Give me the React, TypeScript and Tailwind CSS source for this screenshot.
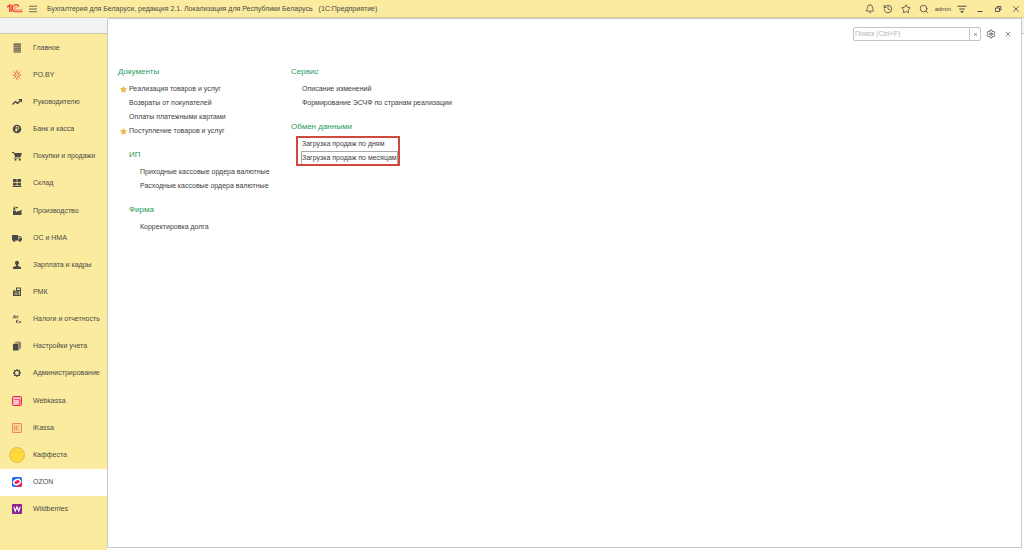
import type { ReactNode } from 'react';
import { Bell, History, Search, Settings, Star, X } from 'lucide-react';

type Section = {
  name: string;
  icon: ReactNode;
  active?: boolean;
};

type Command = {
  name: string;
  starred?: boolean;
  focused?: boolean;
};

type Group = {
  title: string;
  commands: Command[];
  nested?: boolean;
  marked?: boolean;
};

function Glyph({ children }: { children: ReactNode }) {
  return (
    <svg viewBox="0 0 20 20" className="size-2.5" fill="#4a4a48" aria-hidden="true">
      {children}
    </svg>
  );
}

const sections: Section[] = [
  {
    name: 'Главное',
    icon: (
      <Glyph>
        <path d="M3 1h15v2.4H3zM3 5h15v2.4H3zM3 9h15v2.4H3zM3 13h15v2.4H3zM3 17h15v2.200H3z" />
      </Glyph>
    ),
  },
  {
    name: 'PO.BY',
    icon: (
      <Glyph>
        <g stroke="#e8502f" strokeWidth="1.800" strokeLinecap="round">
          <path d="M10 1v5M10 14v5M2 10h6M12 10h6M4 3.500l3.500 4M16 3.500l-3.500 4M4 16.500l3.500-4M16 16.500l-3.500-4" />
        </g>
      </Glyph>
    ),
  },
  {
    name: 'Руководителю',
    icon: (
      <Glyph>
        <path
          d="M1 15l6-6 4 4 6-6"
          fill="none"
          stroke="#4a4a48"
          strokeWidth="2.8"
          strokeLinejoin="round"
        />
        <path d="M12.500 4H20v7.500z" />
      </Glyph>
    ),
  },
  {
    name: 'Банк и касса',
    icon: (
      <Glyph>
        <circle cx="10" cy="10" r="8.500" />
        <path
          d="M8.500 15.500V5h2.500a2.700 2.700 0 0 1 0 5.600H6.500M6.500 13H11"
          fill="none"
          stroke="#fbeb9e"
          strokeWidth="1.600"
        />
      </Glyph>
    ),
  },
  {
    name: 'Покупки и продажи',
    icon: (
      <Glyph>
        <path d="M0 2h4l1 2h15l-3 8H7l-.5 1.500H18V15H4.500L6 11 3 4H0z" />
        <circle cx="7" cy="17.500" r="2" />
        <circle cx="15.500" cy="17.500" r="2" />
      </Glyph>
    ),
  },
  {
    name: 'Склад',
    icon: (
      <Glyph>
        <path d="M2 2h7.300v6.500H2zM10.700 2H18v6.500h-7.300zM2 9.800h7.300V15H2zM10.700 9.800H18V15h-7.300zM1 16h18v2.200H1z" />
      </Glyph>
    ),
  },
  {
    name: 'Производство',
    icon: (
      <Glyph>
        <path d="M2 18V9h5l2 3 5-3v2l5-4v11zM2 7.500L3 4h3l1 3.500zM3 1h3v2H3zM7 2h5v2.500H7z" />
      </Glyph>
    ),
  },
  {
    name: 'ОС и НМА',
    icon: (
      <Glyph>
        <path d="M0 4h12v11H0zM13 6h4l3 4.500V15h-7zM14.300 7.500v3h3.700l-2-3z" fillRule="evenodd" />
        <circle cx="4.500" cy="15.500" r="2.300" />
        <circle cx="15.500" cy="15.500" r="2.300" />
      </Glyph>
    ),
  },
  {
    name: 'Зарплата и кадры',
    icon: (
      <Glyph>
        <path d="M10 1.500a4 4 0 0 1 4 4c0 2-1 3.500-2 4.500v2l6 2v4H2v-4l6-2v-2c-1-1-2-2.500-2-4.500a4 4 0 0 1 4-4z" />
      </Glyph>
    ),
  },
  {
    name: 'РМК',
    icon: (
      <Glyph>
        <path
          d="M8 1h10v17H2V7h6zM10 3v3h6V3zM5 9v2h2V9zM9 9v2h2V9zM5 13v2h6v-2zM13.500 8v8h2V8z"
          fillRule="evenodd"
        />
      </Glyph>
    ),
  },
  {
    name: 'Налоги и отчетность',
    icon: (
      <Glyph>
        <g fill="none" stroke="#4a4a48" strokeWidth="1.600">
          <path d="M2 9l3-7 3 7M3 6.500h4M8.500 4.500h4M10.500 4.500V9M9 12v6M13 12l-3.500 3 3.500 3M14.500 14l3.500 4M18 14l-3.500 4" />
        </g>
      </Glyph>
    ),
  },
  {
    name: 'Настройки учета',
    icon: (
      <Glyph>
        <path d="M2 6h11v13H2z" />
        <path d="M4.500 4.300h10.300V17M7 2.300h10V15" fill="none" stroke="#4a4a48" strokeWidth="1.300" />
      </Glyph>
    ),
  },
  {
    name: 'Администрирование',
    icon: (
      <Glyph>
        <circle cx="10" cy="10" r="5" fill="none" stroke="#4a4a48" strokeWidth="2.400" />
        <path
          d="M10 2v3M10 15v3M2 10h3M15 10h3M4.300 4.300l2.200 2.200M13.500 13.500l2.200 2.200M4.300 15.700l2.200-2.200M13.500 6.500l2.200-2.200"
          stroke="#4a4a48"
          strokeWidth="2.600"
        />
      </Glyph>
    ),
  },
  {
    name: 'Webkassa',
    icon: (
      <svg viewBox="0 0 20 20" className="size-2.5" aria-hidden="true">
        <rect x="1" y="1" width="18" height="18" rx="2" fill="#f9a3ac" stroke="#f5264f" strokeWidth="2" />
        <path d="M4 5.500h12M4 9h9M4 12.500h9M4 16h6" stroke="#fff" strokeWidth="1.300" />
        <path d="M15.500 8v9M4 7.200h12" stroke="#f5264f" strokeWidth="1.500" />
      </svg>
    ),
  },
  {
    name: 'iKassa',
    icon: (
      <svg viewBox="0 0 20 20" className="size-2.5" aria-hidden="true">
        <rect x="1" y="1" width="18" height="18" rx="1" fill="#fbdc91" stroke="#ed7f55" strokeWidth="1.800" />
        <path d="M5 5v10M8.500 5v10M14.500 5l-5.500 5 5.500 5" fill="none" stroke="#ed7f55" strokeWidth="1.700" />
      </svg>
    ),
  },
  {
    name: 'Каффеста',
    icon: (
      <svg viewBox="0 0 32 32" className="size-4" aria-hidden="true">
        <circle cx="16" cy="16" r="15" fill="#ffda3a" stroke="#e3ac55" strokeWidth="1.600" />
        <path d="M8 11h2M13 9h2M18 11h2M23 9h1" stroke="#e0a83c" strokeWidth="1.600" />
      </svg>
    ),
  },
  {
    name: 'OZON',
    active: true,
    icon: (
      <svg viewBox="0 0 20 20" className="size-2.5" aria-hidden="true">
        <rect width="20" height="20" rx="4" fill="#1769f5" />
        <path d="M20 9v7a4 4 0 0 1-4 4H8z" fill="#f5204f" />
        <ellipse cx="10" cy="10" rx="8.500" ry="6.500" transform="rotate(-22 10 10)" fill="#fff" />
        <ellipse cx="10" cy="10" rx="5.500" ry="3.300" transform="rotate(-22 10 10)" fill="#f5204f" />
      </svg>
    ),
  },
  {
    name: 'Wildberries',
    icon: (
      <svg viewBox="0 0 20 20" className="size-2.5" aria-hidden="true">
        <rect width="20" height="20" rx="2" fill="#8d2391" />
        <path d="M3.500 5.500l3 9 3.500-9 3.500 9 3-9" fill="none" stroke="#fff" strokeWidth="2.200" />
      </svg>
    ),
  },
];

const columns: Group[][] = [
  [
    {
      title: 'Документы',
      commands: [
        { name: 'Реализация товаров и услуг', starred: true },
        { name: 'Возвраты от покупателей' },
        { name: 'Оплаты платежными картами' },
        { name: 'Поступление товаров и услуг', starred: true },
      ],
    },
    {
      title: 'ИП',
      nested: true,
      commands: [
        { name: 'Приходные кассовые ордера валютные' },
        { name: 'Расходные кассовые ордера валютные' },
      ],
    },
    {
      title: 'Фирма',
      nested: true,
      commands: [{ name: 'Корректировка долга' }],
    },
  ],
  [
    {
      title: 'Сервис',
      commands: [
        { name: 'Описание изменений' },
        { name: 'Формирование ЭСЧФ по странам реализации' },
      ],
    },
    {
      title: 'Обмен данными',
      marked: true,
      commands: [
        { name: 'Загрузка продаж по дням' },
        { name: 'Загрузка продаж по месяцам', focused: true },
      ],
    },
  ],
];

function Logo() {
  return (
    <svg viewBox="0 0 32 18" className="h-[9px] w-4" fill="none" stroke="#ee3a3a" aria-hidden="true">
      <path d="M0 6.500L5.500 2.500V16" strokeWidth="3" />
      <path d="M9.500 1v15" strokeWidth="2" />
      <path d="M24 5.500A7 7 0 1 0 18 15.500H31" strokeWidth="2.200" />
      <path d="M20.500 7.500A3 3 0 1 0 18 12H31" strokeWidth="1.400" />
    </svg>
  );
}

function TitleBar() {
  return (
    <header className="flex h-[18px] shrink-0 items-center border-b border-[#d8cf9f] bg-[#fbeb9e] pr-[3px] pl-[7px] text-[#4a4a48]">
      <Logo />
      <button type="button" aria-label="Главное меню" className="ml-1.5">
        <svg viewBox="0 0 16 16" className="size-2" stroke="#5c5a4c" strokeWidth="1.800" aria-hidden="true">
          <path d="M0 2.500h16M0 8h16M0 13.500h16" />
        </svg>
      </button>
      <h1 className="ml-2.5 flex gap-1.5 text-[7px] leading-4 whitespace-nowrap">
        <span>Бухгалтерия для Беларуси, редакция 2.1. Локализация для Республики Беларусь</span>
        <span>(1С:Предприятие)</span>
      </h1>
      <div className="ml-auto flex items-center gap-2">
        <button type="button" aria-label="Уведомления">
          <Bell className="size-2.5" strokeWidth={2} />
        </button>
        <button type="button" aria-label="История">
          <History className="size-2.5" strokeWidth={2} />
        </button>
        <button type="button" aria-label="Избранное">
          <Star className="size-2.5" strokeWidth={2} />
        </button>
        <button type="button" aria-label="Поиск">
          <Search className="size-2.5" strokeWidth={2} />
        </button>
        <button type="button" className="-mx-0.5 text-[6px] leading-4">
          admin
        </button>
        <button type="button" aria-label="Настройки окна">
          <svg viewBox="0 0 18 18" className="size-2.5" stroke="#4a4a48" strokeWidth="1.800" aria-hidden="true">
            <path d="M1 4h16M4 9h10" />
            <path d="M6.500 13h5L9 16z" fill="#4a4a48" strokeWidth="1" />
          </svg>
        </button>
        <button type="button" aria-label="Свернуть">
          <svg viewBox="0 0 20 20" className="size-2.5" stroke="#4a4a48" strokeWidth="2" aria-hidden="true">
            <path d="M5 15h10" />
          </svg>
        </button>
        <button type="button" aria-label="Развернуть">
          <svg viewBox="0 0 20 20" className="size-2.5" fill="none" stroke="#4a4a48" strokeWidth="1.800" aria-hidden="true">
            <path d="M5 8h8v7H5zM8 7V5h8v7h-2" />
          </svg>
        </button>
        <button type="button" aria-label="Закрыть">
          <X className="size-2.5" strokeWidth={2} />
        </button>
      </div>
    </header>
  );
}

function Sidebar() {
  return (
    <nav className="flex w-[107px] shrink-0 flex-col">
      <div className="h-4 shrink-0 border-b border-[#cfc9ab] bg-[#f2f2f2]" />
      <ul className="grid flex-1 grid-rows-[repeat(19,minmax(27px,1fr))] bg-[#fbeb9e]">
        {sections.map((section) => (
          <li key={section.name} className={section.active ? 'bg-white' : ''}>
            <a
              href="#"
              className="flex h-full items-center gap-2 pl-[9px] text-[7px] leading-[14px] whitespace-nowrap text-[#4a4a48]"
            >
              <span className="flex w-4 shrink-0 justify-center">{section.icon}</span>
              {section.name}
            </a>
          </li>
        ))}
      </ul>
    </nav>
  );
}

function CommandGroup({ group }: { group: Group }) {
  return (
    <section className={group.nested ? 'pl-[11px]' : ''}>
      <h2 className="mb-[3px] text-[8px] leading-[14px] text-[#279b61]">{group.title}</h2>
      <ul className="relative w-fit">
        {group.commands.map((command) => (
          <li key={command.name} className="flex h-[14px] items-center whitespace-nowrap">
            <span className="flex w-[11px] shrink-0 justify-center">
              {command.starred && <Star className="size-[7px] fill-[#f0b54a] text-[#f0b54a]" />}
            </span>
            <a
              href="#"
              className={`text-[7px] leading-3 text-[#404040] ${
                command.focused ? 'outline outline-1 outline-[#a8a8a8]' : ''
              }`}
            >
              {command.name}
            </a>
          </li>
        ))}
        {group.marked && (
          <li
            aria-hidden="true"
            className="pointer-events-none absolute -inset-y-px -right-[3px] left-[5px] border-2 border-[#cf4a3c]"
          />
        )}
      </ul>
    </section>
  );
}

export default function App() {
  return (
    <div className="flex min-h-screen flex-col bg-white font-['Liberation_Sans',Arial,sans-serif]">
      <TitleBar />
      <div className="flex flex-1">
        <Sidebar />
        <main className="mb-0.5 flex-1 rounded-tl-xs border border-[#c8c8c8] bg-white">
          <div className="flex items-center justify-end pt-2 pr-[9px]">
            <search className="flex h-[14px] w-32 rounded-xs border border-[#c4c4c4]">
              <input
                type="text"
                aria-label="Поиск"
                placeholder="Поиск (Ctrl+F)"
                className="min-w-0 flex-1 px-px text-[7px] leading-3 outline-none placeholder:text-[#b4b4b4]"
              />
              <button
                type="button"
                aria-label="Очистить"
                className="flex w-[11px] items-center justify-center border-l border-[#c4c4c4] text-[#555]"
              >
                <X className="size-[5px]" strokeWidth={3} />
              </button>
            </search>
            <button type="button" aria-label="Настройка" className="ml-[5px] text-[#4a4a48]">
              <Settings className="size-2.5" strokeWidth={2} />
            </button>
            <button type="button" aria-label="Закрыть" className="ml-2 text-[#4a4a48]">
              <X className="size-2" strokeWidth={2} />
            </button>
          </div>
          <div className="flex px-2.5 pt-6">
            {columns.map((groups) => (
              <div key={groups[0].title} className="flex min-w-[173px] flex-col gap-2.5">
                {groups.map((group) => (
                  <CommandGroup key={group.title} group={group} />
                ))}
              </div>
            ))}
          </div>
        </main>
        <div className="w-0.5 shrink-0">
          <div className="h-4 border-b border-[#c8c8c8] bg-[#f2f2f2]" />
        </div>
      </div>
    </div>
  );
}
